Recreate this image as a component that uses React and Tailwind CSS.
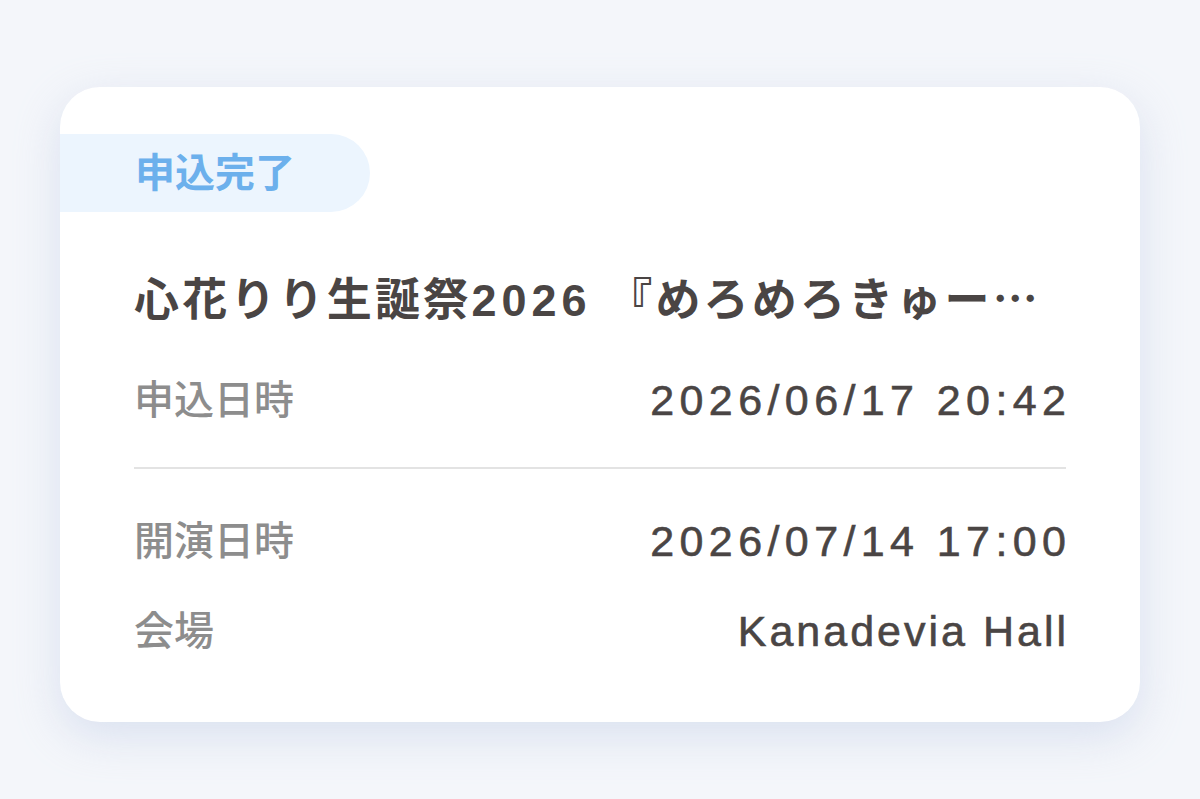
import React from "react";

const ticket = {
  status: "申込完了",
  rows: [
    { label: "申込日時", value: "2026/06/17 20:42" },
    { label: "開演日時", value: "2026/07/14 17:00" },
    { label: "会場", value: "Kanadevia Hall", place: true },
  ],
};

const jp = "font-['Liberation_Sans','Noto_Sans_CJK_JP',sans-serif]";

function InfoRow({ label, value, place }) {
  // dates are set wider than the venue name
  const spacing = place
    ? "tracking-[3px] mr-[-3px]"
    : "tracking-[5.4px] mr-[-5.4px]";

  return (
    <div className="flex items-center justify-between h-[60px]">
      <span className="text-[40px] leading-[60px] font-medium text-[#8d8d8d]">
        {label}
      </span>
      <span
        className={`text-[43px] leading-[60px] text-[#4a4544] [-webkit-text-stroke:0.6px_#4a4544] ${spacing}`}>
        {value}
      </span>
    </div>
  );
}

export default function App() {
  return (
    <div className={`min-h-screen bg-[#f4f6fa] pt-[87px] px-[60px] ${jp}`}>
      <div className="bg-white rounded-[40px] shadow-[0_14px_44px_rgba(186,200,228,0.45)] pt-[47px] pb-[61px] overflow-hidden">
        <div className="inline-flex items-center h-[78px] w-[310px] bg-[#ecf5fe] rounded-r-full pl-[75px]">
          <span className="text-[40px] font-bold text-[#6cb0ec] leading-none">
            {ticket.status}
          </span>
        </div>

        <div className="px-[74px]">
          <h1 className="mt-[57px] h-[60px] flex items-center text-[45px] leading-[60px] font-semibold tracking-[3.2px] text-[#4a4544] whitespace-nowrap">
            <span>
              心花りり生誕祭
              <span className="font-bold tracking-[5px]">2026</span>{" "}
              『めろめろきゅー
              <span className="font-['Noto_Sans_CJK_JP',sans-serif] tracking-normal">…</span>
            </span>
          </h1>

          <div className="mt-[41px]">
            <InfoRow {...ticket.rows[0]} />
          </div>

          <div className="mt-[37px] h-[2px] bg-[#e3e3e3]" />

          <div className="mt-[42px] flex flex-col gap-[30px]">
            <InfoRow {...ticket.rows[1]} />
            <InfoRow {...ticket.rows[2]} />
          </div>
        </div>
      </div>
    </div>
  );
}
